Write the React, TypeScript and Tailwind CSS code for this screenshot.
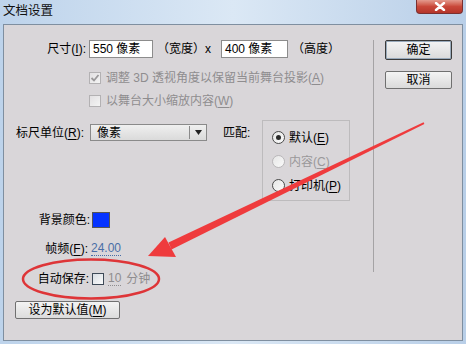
import React from "react";

const font = "font-['Liberation_Sans','Noto_Sans_CJK_SC',sans-serif]";

function Key({ k }: { k: string }) {
  return (
    <>
      (<span className="underline underline-offset-2">{k}</span>)
    </>
  );
}

function Check({ checked, disabled }: { checked?: boolean; disabled?: boolean }) {
  return (
    <span
      className={
        "flex h-[12px] w-[12px] shrink-0 items-center justify-center border " +
        (disabled
          ? "border-[#b3b1b3] bg-gradient-to-br from-[#e2e0e2] to-[#f4f4f4]"
          : "border-[#3e4a58] bg-gradient-to-br from-[#d8dde4] to-[#fbfbfb]")
      }
    >
      {checked && (
        <svg width="10" height="10" viewBox="0 0 10 10">
          <path d="M1.5 5 L4 7.5 L8.5 2" fill="none" stroke="#9a989a" strokeWidth="1.8" />
        </svg>
      )}
    </span>
  );
}

function Radio({ on, disabled }: { on?: boolean; disabled?: boolean }) {
  return (
    <span
      className={
        "flex h-[13px] w-[13px] shrink-0 items-center justify-center rounded-full border bg-gradient-to-br from-[#e6e6e6] to-[#fafafa] " +
        (disabled ? "border-[#b9b7b9]" : "border-[#4a4a4a]")
      }
    >
      {on && <span className="h-[5px] w-[5px] rounded-full bg-[#2a2a2a]" />}
    </span>
  );
}

export default function App() {
  return (
    <div className={`relative h-[344px] w-[466px] overflow-hidden bg-gradient-to-r from-[#bdd3eb] via-[#dbe8f5] to-[#b9cfe8] text-[12px] leading-[16px] text-black ${font}`}>
      {/* TITLE BAR */}
      <div className="flex h-[24px] items-start justify-between pl-[3px] pr-[3px]">
        <span className="pt-[3px] text-[12.5px] leading-[16px] text-[#111]">文档设置</span>
        <div className="flex h-[14px] w-[47px] items-center justify-center rounded-b-[4px] border border-t-0 border-[#7a3030] bg-gradient-to-b from-[#e39a8e] via-[#c9483a] to-[#b5352a]">
          <svg width="12" height="9" viewBox="0 0 12 9">
            <path d="M2 1 L10 8 M10 1 L2 8" stroke="#fff" strokeWidth="2.4" strokeLinecap="round" />
          </svg>
        </div>
      </div>

      {/* BODY */}
      <div className="mx-[3px] flex h-[317px] border border-[#7f8fa0] bg-[#d9d6d9]">
        {/* LEFT */}
        <div className="flex w-[369px] flex-col pt-[15px]">
          {/* size */}
          <div className="flex h-[18px] items-center">
            <span className="w-[82px] text-right">尺寸<Key k="I" />:</span>
            <span className="ml-[3px] flex h-[18px] w-[64px] items-center border border-[#8c8c8c] bg-white pl-[3px]">550 像素</span>
            <span className="w-[68px] pl-[4px]">（宽度）x</span>
            <span className="flex h-[18px] w-[67px] items-center border border-[#8c8c8c] bg-white pl-[3px]">400 像素</span>
            <span className="pl-[4px]">（高度）</span>
          </div>

          <div className="mt-[11px] flex h-[18px] items-center pl-[85px] text-[#8f8d8f]">
            <Check checked disabled />
            <span className="ml-[5px]">调整 3D 透视角度以保留当前舞台投影<Key k="A" /></span>
          </div>
          <div className="mt-[5px] flex h-[18px] items-center pl-[85px] text-[#8f8d8f]">
            <Check disabled />
            <span className="ml-[5px]">以舞台大小缩放内容<Key k="W" /></span>
          </div>

          {/* ruler + match */}
          <div className="mt-[10px] flex items-start">
            <div className="mt-[4px] flex items-center">
              <span className="w-[80px] text-right">标尺单位<Key k="R" />:</span>
              <div className="ml-[6px] flex h-[17px] w-[117px] items-center border border-[#8a8a8a] bg-gradient-to-b from-[#f0f0f0] to-[#dadada]">
                <span className="flex-1 pl-[6px]">像素</span>
                <span className="h-[13px] w-px bg-[#8a8a8a]" />
                <span className="flex w-[16px] justify-center">
                  <svg width="7" height="5" viewBox="0 0 7 5"><path d="M0 0 H7 L3.5 5 Z" fill="#222" /></svg>
                </span>
              </div>
              <span className="ml-[16px] w-[39px]">匹配:</span>
            </div>
            <div className="flex h-[81px] w-[88px] flex-col gap-[11px] border border-[#bdbbbd] pl-[9px] pt-[10px]">
              <div className="flex h-[13px] items-center">
                <Radio on />
                <span className="ml-[4px]">默认<Key k="E" /></span>
              </div>
              <div className="flex h-[13px] items-center text-[#9a989a]">
                <Radio disabled />
                <span className="ml-[4px]">内容<Key k="C" /></span>
              </div>
              <div className="flex h-[13px] items-center">
                <Radio />
                <span className="ml-[4px]">打印机<Key k="P" /></span>
              </div>
            </div>
          </div>

          {/* bg colour */}
          <div className="mt-[11px] flex h-[16px] items-center">
            <span className="w-[86px] text-right">背景颜色:</span>
            <span className="ml-[2px] h-[16px] w-[18px] border border-[#555] bg-[#0533ff]" />
          </div>

          <div className="mt-[13px] flex h-[16px] items-center">
            <span className="w-[84px] text-right">帧频<Key k="F" />:</span>
            <span className="ml-[3px] border-b border-dotted border-[#4a6ea6] leading-[13px] text-[#4a6ea6]">24.00</span>
          </div>

          <div className="mt-[14px] flex h-[16px] items-center">
            <span className="w-[85px] text-right">自动保存:</span>
            <span className="ml-[3px]"><Check /></span>
            <span className="ml-[4px] border-b border-dotted border-[#8f8d8f] leading-[13px] text-[#8f8d8f]">10</span>
            <span className="ml-[5px] text-[#8f8d8f]">分钟</span>
          </div>

          <div className="mt-[14px] pl-[11px]">
            <button className="flex h-[18px] w-[105px] items-center justify-center rounded-[2px] border border-[#707070] bg-gradient-to-b from-[#f3f3f3] to-[#dcdcdc] text-[12px] leading-[16px]">
              设为默认值<Key k="M" />
            </button>
          </div>
        </div>

        {/* SEPARATOR */}
        <div className="mt-[15px] h-[232px] w-px bg-[#a5a3a5]" />

        {/* RIGHT */}
        <div className="ml-[11px] flex flex-col pt-[15px]">
          <button className="flex h-[20px] w-[67px] items-center justify-center rounded-[2px] border border-[#3a3a3a] bg-gradient-to-b from-[#f4f4f4] to-[#dadada] text-[12px] leading-[16px] shadow-[inset_0_0_0_1px_#9ab]">
            确定
          </button>
          <button className="mt-[11px] flex h-[18px] w-[67px] items-center justify-center rounded-[2px] border border-[#707070] bg-gradient-to-b from-[#f4f4f4] to-[#dadada] text-[12px] leading-[16px]">
            取消
          </button>
        </div>
      </div>

      {/* ANNOTATION */}
      <svg className="pointer-events-none absolute left-0 top-0" width="466" height="344" viewBox="0 0 466 344">
        <ellipse cx="91" cy="279" rx="68" ry="19.5" fill="none" stroke="#de3538" strokeWidth="2.5" />
        <polygon points="423.6,122.3 168.5,242.6 171.5,249.4 424.4,123.9" fill="#ef3b3d" />
        <polygon points="165,237 148,256 176,257" fill="#ef3b3d" />
      </svg>
    </div>
  );
}
